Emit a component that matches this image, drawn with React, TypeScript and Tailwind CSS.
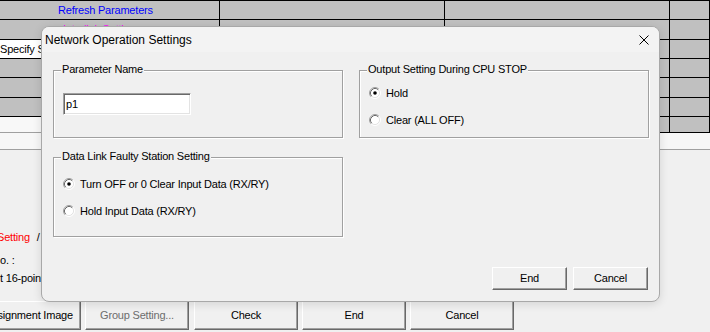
import React from "react";

function Radio({ checked }: { checked?: boolean }) {
  return (
    <svg width="12" height="12" viewBox="0 0 12 12" className="shrink-0">
      <circle cx="6" cy="6" r="4.5" fill="#fff" />
      <path d="M2.11 9.89 A5.5 5.5 0 0 1 9.89 2.11" fill="none" stroke="#a0a0a0" strokeWidth="1" />
      <path d="M9.89 2.11 A5.5 5.5 0 0 1 2.11 9.89" fill="none" stroke="#ffffff" strokeWidth="1" />
      <path d="M2.82 9.18 A4.5 4.5 0 0 1 9.18 2.82" fill="none" stroke="#696969" strokeWidth="1" />
      <path d="M9.18 2.82 A4.5 4.5 0 0 1 2.82 9.18" fill="none" stroke="#e3e3e3" strokeWidth="1" />
      {checked && <circle cx="6" cy="6" r="1.8" fill="#000" />}
    </svg>
  );
}

function RadioRow({ checked, label }: { checked?: boolean; label: string }) {
  return (
    <div className="flex h-[14px] items-center gap-[5px]">
      <Radio checked={checked} />
      <span className="whitespace-nowrap leading-[13px]">{label}</span>
    </div>
  );
}

function Cell({ className = "", children }: { className?: string; children?: React.ReactNode }) {
  return (
    <div className={"flex items-center overflow-hidden whitespace-nowrap border-b border-r border-black bg-[#c0c0c0] " + className}>
      {children}
    </div>
  );
}

function GroupBox({ label, className = "", children }: { label: string; className?: string; children?: React.ReactNode }) {
  return (
    <div className={"relative border border-[#a0a0a0] shadow-[1px_1px_0_#fff,inset_1px_1px_0_#fff] " + className}>
      <span className="absolute left-[7px] top-[-8px] bg-[#f0f0f0] px-[1px] leading-[13px] whitespace-nowrap">{label}</span>
      {children}
    </div>
  );
}

function WinButton({ className = "", children }: { className?: string; children?: React.ReactNode }) {
  return (
    <div className={"flex shrink-0 items-center justify-center whitespace-nowrap border-b border-l border-r border-t border-b-[#696969] border-l-white border-r-[#696969] border-t-white bg-[#f0f0f0] shadow-[inset_-1px_-1px_0_#a0a0a0] " + className}>
      {children}
    </div>
  );
}

export default function App() {
  return (
    <div className="relative h-[332px] w-[710px] overflow-hidden bg-[#f0f0f0] font-['Liberation_Sans',Arial,sans-serif] text-[11px] tracking-[-0.2px] text-black">
      {/* background grid */}
      <div className="border-t border-black">
        <div className="grid h-[19px] grid-cols-[220px_225px_225px_40px]">
          <Cell className="pl-[58px] text-[#0000ff]">Refresh Parameters</Cell>
          <Cell />
          <Cell />
          <Cell />
        </div>
        <div className="grid h-[20px] grid-cols-[220px_225px_225px_40px]">
          <Cell className="pl-[63px] text-[#ff00ff]">Interlink Setting</Cell>
          <Cell />
          <Cell />
          <Cell />
        </div>
        <div className="grid h-[19px] grid-cols-[220px_225px_225px_40px]">
          <Cell className="bg-white pl-0">Specify Station No.</Cell>
          <Cell />
          <Cell />
          <Cell />
        </div>
        <div className="grid h-[19px] grid-cols-[220px_225px_225px_40px]">
          <Cell />
          <Cell />
          <Cell />
          <Cell />
        </div>
        <div className="grid h-[20px] grid-cols-[220px_225px_225px_40px]">
          <Cell />
          <Cell />
          <Cell />
          <Cell />
        </div>
        <div className="grid h-[19px] grid-cols-[220px_225px_225px_40px]">
          <Cell />
          <Cell />
          <Cell />
          <Cell />
        </div>
        <div className="grid h-[16px] grid-cols-[220px_225px_225px_40px]">
          <div className="border-b border-[#a0a0a0] bg-[#f8f8f8]" />
          <Cell />
          <Cell />
          <Cell />
        </div>
        <div className="h-[17px] border-b border-[#a0a0a0] bg-[#f7f7f7]" />
      </div>

      {/* lower area text */}
      <div className="flex h-[151px] flex-col pt-[81px] leading-[13px]">
        <div className="flex gap-[7px] whitespace-nowrap">
          <span className="ml-[-3px] text-[#ff0000]">Setting</span>
          <span>/</span>
          <span className="text-[#0000ff]">Interlink Setting</span>
        </div>
        <div className="mt-[10px] whitespace-nowrap">o. :</div>
        <div className="mt-[5px] whitespace-nowrap">t 16-point Input Module</div>
      </div>

      {/* bottom buttons */}
      <div className="ml-[-23px] flex h-[29px] gap-[4px]">
        <WinButton className="h-[29px] w-[104px]">Assignment Image</WinButton>
        <WinButton className="h-[29px] w-[104px] text-[#6d6d6d]">Group Setting...</WinButton>
        <WinButton className="ml-[1px] h-[29px] w-[104px]">Check</WinButton>
        <WinButton className="h-[29px] w-[104px]">End</WinButton>
        <WinButton className="h-[29px] w-[104px]">Cancel</WinButton>
      </div>

      {/* dialog */}
      <div className="absolute left-[41px] top-[26px] flex h-[276px] w-[619px] flex-col overflow-hidden rounded-[8px] border border-[#a8a8a8] bg-[#f0f0f0] shadow-[0_2px_10px_rgba(0,0,0,0.12)]">
        <div className="flex h-[25px] shrink-0 items-center bg-[#f3f3f3]">
          <span className="flex-1 pl-[3px] text-[12px] tracking-normal">Network Operation Settings</span>
          <div className="flex h-full w-[30px] items-center justify-center">
            <svg width="10" height="10" viewBox="0 0 10 10">
              <path d="M0.5 0.5 L9.5 9.5 M9.5 0.5 L0.5 9.5" stroke="#000" strokeWidth="1" />
            </svg>
          </div>
        </div>
        <div className="flex flex-1 flex-col pl-[11px] pr-[10px] pt-[18px]">
          <div className="grid grid-cols-[290px_290px] gap-x-[16px]">
            <div className="flex flex-col">
              <GroupBox label="Parameter Name" className="h-[68px] pl-[9px] pt-[22px]">
                <div className="flex h-[22px] w-[128px] items-center border-b border-l border-r border-t border-b-white border-l-[#a0a0a0] border-r-white border-t-[#a0a0a0] bg-white pl-[2px] shadow-[inset_1px_1px_0_#696969,inset_-1px_-1px_0_#e3e3e3]">
                  p1
                </div>
              </GroupBox>
              <GroupBox label="Data Link Faulty Station Setting" className="mt-[19px] flex h-[80px] flex-col gap-[13px] pl-[9px] pt-[19px]">
                <RadioRow checked label="Turn OFF or 0 Clear Input Data (RX/RY)" />
                <RadioRow label="Hold Input Data (RX/RY)" />
              </GroupBox>
            </div>
            <div>
              <GroupBox label="Output Setting During CPU STOP" className="flex h-[68px] flex-col gap-[13px] pl-[9px] pt-[15px]">
                <RadioRow checked label="Hold" />
                <RadioRow label="Clear (ALL OFF)" />
              </GroupBox>
            </div>
          </div>
          <div className="mt-auto flex justify-end gap-[6px] pb-[11px] pr-[1px]">
            <WinButton className="h-[23px] w-[75px]">End</WinButton>
            <WinButton className="h-[23px] w-[75px]">Cancel</WinButton>
          </div>
        </div>
      </div>
    </div>
  );
}
